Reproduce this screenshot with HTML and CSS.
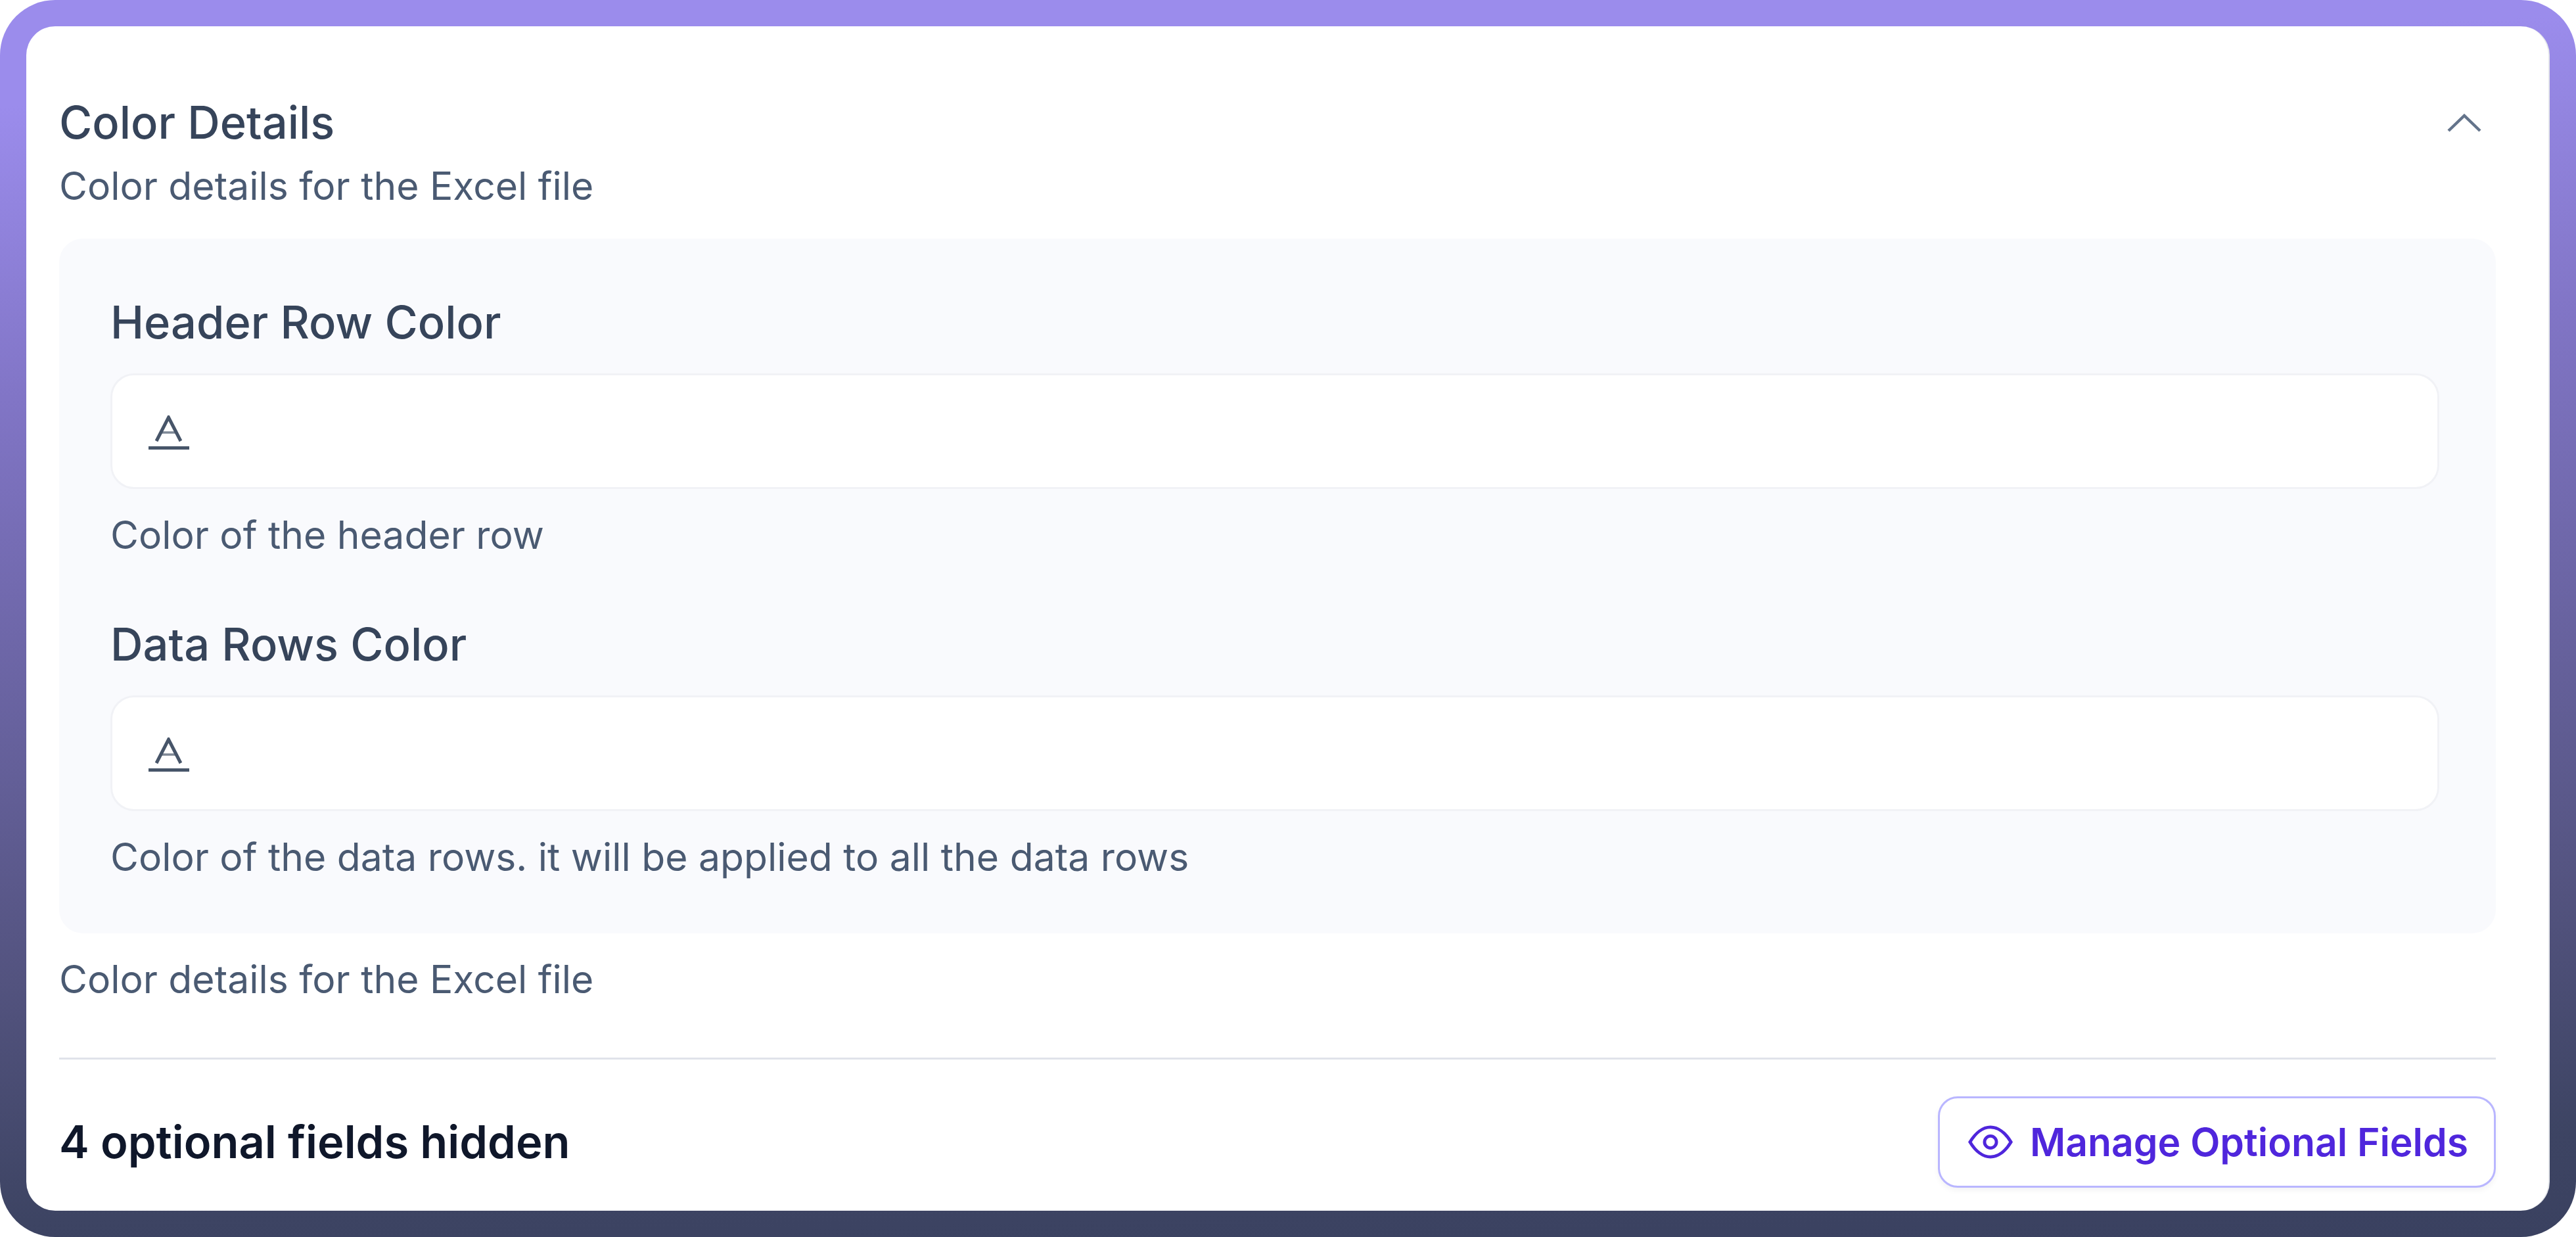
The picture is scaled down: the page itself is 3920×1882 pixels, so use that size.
FILE: index.html
```html
<!DOCTYPE html>
<html lang="en">
  <head>
    <meta charset="UTF-8" />
    <title>Color Details</title>
    <link rel="stylesheet" href="styles.css">
  </head>
  <body>
    <div class="frame">
      <div class="card">
        <div class="section-head">
          <div>
            <h2>Color Details</h2>
            <p class="help">Color details for the Excel file</p>
          </div>
          <svg class="chevron" viewBox="0 0 52 28" fill="none" stroke="#64748b" stroke-width="4.5">
            <path d="M2 26 L26 3 L50 26" />
          </svg>
        </div>

        <div class="panel">
          <div class="field">
            <label>Header Row Color</label>
            <div class="input">
              <svg class="icon-a" viewBox="0 0 64 52" fill="none" stroke="#475569">
                <path d="M13 39 L31.500 3 L50 39" stroke-width="5" />
                <path d="M19 26 H44" stroke-width="3.500" opacity="0.7" />
                <path d="M1 49.500 H63" stroke-width="5" />
              </svg>
            </div>
            <p class="help">Color of the header row</p>
          </div>
          <div class="field">
            <label>Data Rows Color</label>
            <div class="input">
              <svg class="icon-a" viewBox="0 0 64 52" fill="none" stroke="#475569">
                <path d="M13 39 L31.500 3 L50 39" stroke-width="5" />
                <path d="M19 26 H44" stroke-width="3.500" opacity="0.7" />
                <path d="M1 49.500 H63" stroke-width="5" />
              </svg>
            </div>
            <p class="help">Color of the data rows. it will be applied to all the data rows</p>
          </div>
        </div>

        <p class="help below">Color details for the Excel file</p>

        <div class="footer">
          <span class="hidden-count">4 optional fields hidden</span>
          <button>
            <svg class="eye" viewBox="0 0 24 18" fill="none" stroke="#4f26dc" stroke-width="1.7">
              <path d="M1 9 C4 4 8 1 12 1 C16 1 20 4 23 9 C20 14 16 17 12 17 C8 17 4 14 1 9 Z" />
              <circle cx="12" cy="9" r="3.2" />
            </svg>
            Manage Optional Fields
          </button>
        </div>
      </div>
    </div>
  </body>
</html>
```

FILE: styles.css
```css
* {
  box-sizing: border-box;
}
body {
  margin: 0;
  background: #fff;
  font-family: Inter, "Noto Sans", sans-serif;
}
.frame {
  height: 1882px;
  padding: 40px;
  border-radius: 84px;
  background: linear-gradient(178deg, #9b8cec 0%, #9b8cec 8%, #8175c6 30%, #53537f 74%, #3d4463 92%, #3a4160 100%);
}
.card {
  height: 100%;
  padding: 107px 80px 0 50px;
  border-radius: 44px;
  border-right: 2px solid #e5e7eb;
  background: #fff;
}
.section-head {
  display: flex;
  justify-content: space-between;
  height: 216px;
}
h2 {
  margin: 0 0 16px;
  font-size: 68.6px;
  font-weight: 500;
  line-height: 80px;
  color: #36445a;
}
.help {
  margin: 0;
  font-size: 58.8px;
  line-height: 80px;
  color: #4a5a72;
}
.chevron {
  width: 52px;
  height: 28px;
  margin: 26px 22px 0 0;
}
.panel {
  display: flex;
  flex-direction: column;
  gap: 87px;
  height: 1057px;
  padding: 88px 86px 0 78px;
  border-radius: 36px;
  background: #f9fafd;
}
label {
  display: block;
  height: 80px;
  margin-bottom: 37px;
  font-size: 68.6px;
  font-weight: 500;
  line-height: 80px;
  color: #36445a;
}
.input {
  display: flex;
  align-items: center;
  height: 176px;
  margin-bottom: 30px;
  padding: 0 54px;
  border: 3px solid #f1f2f6;
  border-radius: 36px;
  background: #fff;
}
.icon-a {
  width: 64px;
  height: 52px;
  margin-top: 4px;
}
.below {
  margin-top: 30px;
}
.footer {
  display: flex;
  justify-content: space-between;
  align-items: center;
  margin-top: 79px;
  padding-top: 56px;
  border-top: 3px solid #e0e3ea;
}
.hidden-count {
  font-size: 68.6px;
  font-weight: 600;
  color: #0f172a;
}
button {
  display: flex;
  align-items: center;
  gap: 26px;
  height: 139px;
  padding: 0 39px 0 43px;
  border: 3px solid #b9b6ff;
  border-radius: 30px;
  background: #fff;
  box-shadow: 0 4px 8px rgba(15, 23, 42, 0.05);
  font-family: inherit;
  font-size: 58.8px;
  font-weight: 600;
  color: #4f26dc;
}
.eye {
  width: 68px;
  height: 51px;
}
```
